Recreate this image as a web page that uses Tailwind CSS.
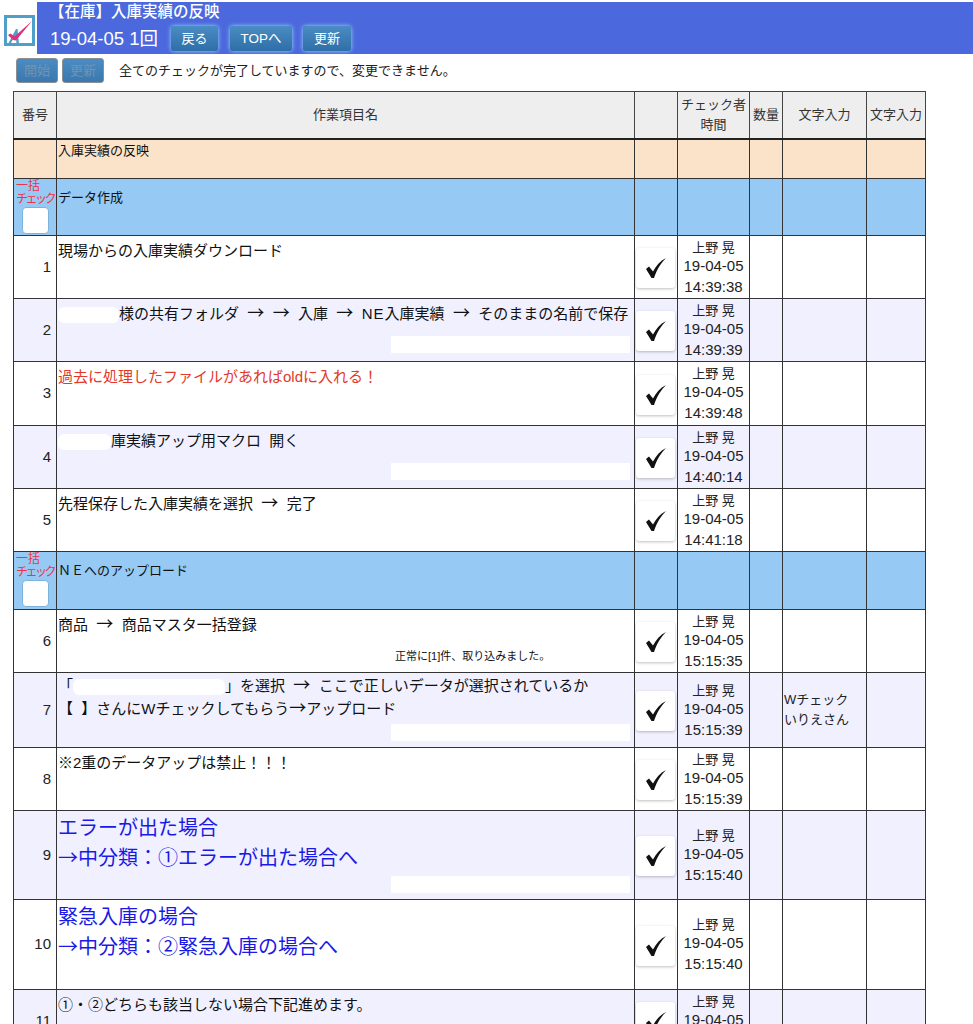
<!DOCTYPE html>
<html lang="ja">
<head>
    <meta charset="UTF-8">
    <meta name="viewport" content="width=device-width, initial-scale=1.0">
    <title>【在庫】入庫実績の反映</title>
    <script src="https://cdn.jsdelivr.net/npm/@tailwindcss/browser@4"></script>
</head>
<body class="bg-white text-[#222] font-['Liberation_Sans','Noto_Sans_CJK_JP',sans-serif]">
<div class="h-[1024px] overflow-hidden">

    <!-- ヘッダー -->
    <header class="flex pt-[2px] h-[54px]">
        <div class="w-[37px] flex items-center justify-center pl-[1px] pt-[5px]">
            <svg width="31" height="31" viewBox="0 0 31 31">
                <rect x="1.500" y="1.500" width="28" height="28" fill="#fff" stroke="#4f9fcb" stroke-width="3"/>
                <path d="M4 29L12 14l1.500 0L15 29h-2.500L12 23l-3 1-2.500 5z" fill="#4f9fcb"/>
                <path d="M4 20l2.500-1.500 4 3L28 6 12 25.500 9 25z" fill="#e0307e"/>
            </svg>
        </div>
        <div class="flex-1 bg-[#4b69dc] text-white pl-[13px]">
            <div class="text-[15.5px] leading-[20px] -ml-[1px] font-medium">【在庫】入庫実績の反映</div>
            <div class="flex items-center mt-[3px]">
                <span class="text-[18.5px] w-[121px]">19-04-05 1回</span>
                <button class="w-[47px] h-[25px] rounded-[3px] text-[13px] bg-gradient-to-b from-[#4a8cc4] to-[#2f6fa8] shadow-[0_0_4px_#9fdcff]">戻る</button>
                <button class="w-[62px] h-[25px] ml-[12px] rounded-[3px] text-[13.5px] bg-gradient-to-b from-[#4a8cc4] to-[#2f6fa8] shadow-[0_0_4px_#9fdcff]">TOPへ</button>
                <button class="w-[48px] h-[25px] ml-[11px] rounded-[3px] text-[13px] bg-gradient-to-b from-[#4a8cc4] to-[#2f6fa8] shadow-[0_0_4px_#9fdcff]">更新</button>
            </div>
        </div>
    </header>

    <!-- 操作バー -->
    <div class="flex items-center h-[37px] pl-[16px] pb-[4px]">
        <button class="w-[42px] h-[25px] rounded-[3px] text-[13px] text-[#7393ad] border border-[#8a8f94] bg-gradient-to-b from-[#4a8cc4] to-[#3a78ae]">開始</button>
        <button class="w-[42px] h-[25px] ml-[4px] rounded-[3px] text-[13px] text-[#7393ad] border border-[#8a8f94] bg-gradient-to-b from-[#4a8cc4] to-[#3a78ae]">更新</button>
        <span class="ml-[15px] text-[13px]">全てのチェックが完了していますので、変更できません。</span>
    </div>

    <!-- 作業テーブル -->
    <table class="ml-[13px] w-[912px] table-fixed border-collapse text-[15px] text-[#111]">
        <colgroup>
            <col class="w-[43px]"><col class="w-[578px]"><col class="w-[43px]"><col class="w-[72px]"><col class="w-[33px]"><col class="w-[84px]"><col class="w-[59px]">
        </colgroup>
        <thead>
            <tr class="h-[47px] bg-[#eeeeee] text-[13px] text-[#333] border-b-2 border-[#222]">
                <th class="border border-[#444] font-normal">番号</th>
                <th class="border border-[#444] font-normal">作業項目名</th>
                <th class="border border-[#444] font-normal"></th>
                <th class="border border-[#444] font-normal leading-[20px]">チェック者<br>時間</th>
                <th class="border border-[#444] font-normal">数量</th>
                <th class="border border-[#444] font-normal">文字入力</th>
                <th class="border border-[#444] font-normal">文字入力</th>
            </tr>
        </thead>
        <tbody id="rows"></tbody>
    </table>
</div>

<script>
    // 区切り行と作業行の定義
    const ar = `<span class="font-['Noto_Sans_CJK_JP'] text-[17px] leading-none">→</span>`;
    const arBlue = `<span class="font-['Noto_Sans_CJK_JP'] leading-none">→</span>`;
    const redact = w => `<span class="inline-block h-[16px] rounded-[6px] bg-white align-middle" style="width:${w}px"></span>`;
    const inputBox = `<div class="absolute right-[4px] bottom-[8px] w-[239px] h-[17px] bg-white"></div>`;
    const inputBoxLow = `<div class="absolute right-[4px] bottom-[6px] w-[239px] h-[17px] bg-white"></div>`;
    const blue = (a, b) => `<div class="text-[20px] leading-[30px] text-[#1a1ae6] -mt-[1px]">${a}<br>${b}</div>`;
    const cellBorder = 'border border-[#333]';

    const title = `<tr class="h-[40px] bg-[#fae3c8]"><td class="${cellBorder}"></td><td class="${cellBorder} align-top pl-[1px] pt-[3px] text-[13px] leading-[16px]">入庫実績の反映</td><td class="${cellBorder}"></td><td class="${cellBorder}"></td><td class="${cellBorder}"></td><td class="${cellBorder}"></td><td class="${cellBorder}"></td></tr>`;
    const group = (name, h) => `<tr class="bg-[#96caf5]" style="height:${h}px"><td class="${cellBorder} align-top text-[12px] leading-[13px] text-[#ee3344] pt-[1px]"><div class="whitespace-nowrap pl-[2px]">一括</div><div class="whitespace-nowrap pl-[2px] tracking-[-2.5px]">チェック</div><div class="w-[27px] h-[27px] mx-auto mt-[1px] bg-white rounded-[4px] border border-[#7db4dd]"></div></td><td class="${cellBorder} align-top pl-[1px] pt-[12px] text-[13px] leading-[14px]">${name}</td><td class="${cellBorder}"></td><td class="${cellBorder}"></td><td class="${cellBorder}"></td><td class="${cellBorder}"></td><td class="${cellBorder}"></td></tr>`;

    const row = (r) => `<tr class="${r.tint ? 'bg-[#f0f0ff]' : 'bg-white'}" style="height:${r.h}px">
        <td class="${cellBorder} text-right pr-[5px] text-[15px] text-[#222]">${r.no}</td>
        <td class="${cellBorder} relative align-top pl-[1px] pt-[3px] leading-[23px]">${r.html}</td>
        <td class="${cellBorder} px-[1px] align-middle"><div class="w-[39px] h-[40px] mt-[2px] bg-white rounded-[3px] shadow-[0_1px_3px_rgba(0,0,0,.25)] flex items-center justify-center"><svg width="24" height="22" viewBox="0 0 24 22"><path d="M2 12l3-2.500 4 5C12 9 16 4 22 1c-5 5-9 11-12 20h-2.500z" fill="#111"/></svg></div></td>
        <td class="${cellBorder} text-center text-[#222]"><div class="text-[13px] leading-[20px]">上野 晃</div><div class="text-[15px] leading-[21px] -mt-[3px]">${r.date}</div><div class="text-[15px] leading-[21px]">${r.time}</div></td>
        <td class="${cellBorder}"></td>
        <td class="${cellBorder} text-[13px] leading-[20px] pl-[1px] text-[#222]">${r.note || ''}</td>
        <td class="${cellBorder}"></td>
    </tr>`;

    const d = '19-04-05';
    const html = [
        title,
        group('データ作成', 57),
        row({no: 1, h: 63, date: d, time: '14:39:38', html: '現場からの入庫実績ダウンロード'}),
        row({no: 2, h: 63, tint: true, date: d, time: '14:39:39', html: `${redact(61)}様の共有フォルダ &nbsp;${ar}&nbsp; ${ar}&nbsp; 入庫 &nbsp;${ar}&nbsp; <span class="tracking-[1px]">NE</span>入庫実績 &nbsp;${ar}&nbsp; そのままの名前で保存${inputBox}`}),
        row({no: 3, h: 64, date: d, time: '14:39:48', html: '<span class="text-[#e23a2a]">過去に処理したファイルがあればoldに入れる！</span>'}),
        row({no: 4, h: 63, tint: true, date: d, time: '14:40:14', html: `${redact(53)}庫実績アップ用マクロ &nbsp;開く${inputBox}`}),
        row({no: 5, h: 63, date: d, time: '14:41:18', html: `先程保存した入庫実績を選択 &nbsp;${ar}&nbsp; 完了`}),
        group('ＮＥへのアップロード', 58),
        row({no: 6, h: 63, date: d, time: '15:15:35', html: `商品 &nbsp;${ar}&nbsp; 商品マスタ一括登録<div class="absolute left-[338px] bottom-[9px] text-[11px] leading-[14px]">正常に[1]件、取り込みました。</div>`}),
        row({no: 7, h: 75, tint: true, date: d, time: '15:15:39', note: 'Wチェック<br>いりえさん', html: `<div class="-mt-[2px]">「${redact(152)}」を選択 &nbsp;${ar}&nbsp; ここで正しいデータが選択されているか<br>【&nbsp;&nbsp;】さんにWチェックしてもらう${ar}アップロード</div>${inputBoxLow}`}),
        row({no: 8, h: 63, date: d, time: '15:15:39', html: '※2重のデータアップは禁止！！！'}),
        row({no: 9, h: 89, tint: true, date: d, time: '15:15:40', html: `${blue('エラーが出た場合', `${arBlue}中分類：①エラーが出た場合へ`)}${inputBoxLow}`}),
        row({no: 10, h: 90, date: d, time: '15:15:40', html: blue('緊急入庫の場合', `${arBlue}中分類：②緊急入庫の場合へ`)}),
        row({no: 11, h: 63, tint: true, date: d, time: '15:15:41', html: '①・②どちらも該当しない場合下記進めます。'}),
    ];
    document.getElementById('rows').innerHTML = html.join('');
</script>
</body>
</html>
